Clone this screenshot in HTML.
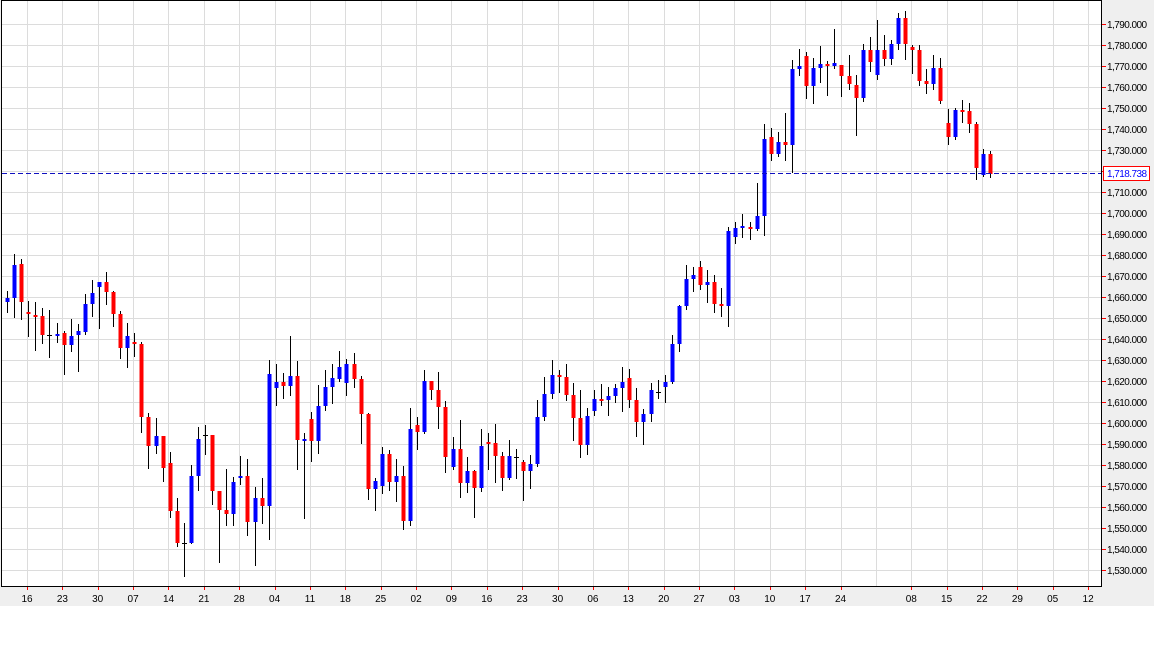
<!DOCTYPE html>
<html><head><meta charset="utf-8"><style>
html,body{margin:0;padding:0;background:#fff;width:1154px;height:648px;overflow:hidden}
svg{display:block}
text{font-family:"Liberation Sans",sans-serif;font-size:10px;fill:#000}
</style></head><body>
<svg id="s" width="1154" height="648" xmlns="http://www.w3.org/2000/svg">
<rect x="0" y="0" width="1154" height="606" fill="#efefef"/>
<rect x="1" y="0" width="1101" height="586" fill="#fff"/>
<g id="grid"></g>
<g id="candles"></g>
<line x1="2" y1="173.5" x2="1101" y2="173.5" stroke="#1010c0" stroke-width="1" stroke-dasharray="5,3"/>
<path d="M1.5 0V586.5H1101.5V0" fill="none" stroke="#000" stroke-width="1"/>
<line x1="1" y1="0.5" x2="1102" y2="0.5" stroke="#000"/>
<g id="ticks"></g>
<g text-anchor="start">
<text x="1107" y="28" textLength="40">1,790.000</text><text x="1107" y="49" textLength="40">1,780.000</text><text x="1107" y="70" textLength="40">1,770.000</text><text x="1107" y="91" textLength="40">1,760.000</text><text x="1107" y="112" textLength="40">1,750.000</text><text x="1107" y="133" textLength="40">1,740.000</text><text x="1107" y="154" textLength="40">1,730.000</text><text x="1107" y="196" textLength="40">1,710.000</text><text x="1107" y="217" textLength="40">1,700.000</text><text x="1107" y="238" textLength="40">1,690.000</text><text x="1107" y="259" textLength="40">1,680.000</text><text x="1107" y="280" textLength="40">1,670.000</text><text x="1107" y="301" textLength="40">1,660.000</text><text x="1107" y="322" textLength="40">1,650.000</text><text x="1107" y="343" textLength="40">1,640.000</text><text x="1107" y="364" textLength="40">1,630.000</text><text x="1107" y="385" textLength="40">1,620.000</text><text x="1107" y="406" textLength="40">1,610.000</text><text x="1107" y="427" textLength="40">1,600.000</text><text x="1107" y="448" textLength="40">1,590.000</text><text x="1107" y="469" textLength="40">1,580.000</text><text x="1107" y="490" textLength="40">1,570.000</text><text x="1107" y="511" textLength="40">1,560.000</text><text x="1107" y="532" textLength="40">1,550.000</text><text x="1107" y="553" textLength="40">1,540.000</text><text x="1107" y="574" textLength="40">1,530.000</text>
</g>
<rect x="1103.5" y="166.5" width="46" height="14" fill="#fff" stroke="#f00"/>
<text x="1107" y="177" textLength="40" style="fill:#0000ff">1,718.738</text>
<g text-anchor="middle">
<text x="27" y="602">16</text><text x="62.4" y="602">23</text><text x="97.7" y="602">30</text><text x="133.1" y="602">07</text><text x="168.5" y="602">14</text><text x="203.9" y="602">21</text><text x="239.2" y="602">28</text><text x="274.6" y="602">04</text><text x="310" y="602">11</text><text x="345.3" y="602">18</text><text x="380.7" y="602">25</text><text x="416.1" y="602">02</text><text x="451.4" y="602">09</text><text x="486.8" y="602">16</text><text x="522.2" y="602">23</text><text x="557.6" y="602">30</text><text x="592.9" y="602">06</text><text x="628.3" y="602">13</text><text x="663.7" y="602">20</text><text x="699" y="602">27</text><text x="734.4" y="602">03</text><text x="769.8" y="602">10</text><text x="805.1" y="602">17</text><text x="840.5" y="602">24</text><text x="911.3" y="602">08</text><text x="946.6" y="602">15</text><text x="982" y="602">22</text><text x="1017.4" y="602">29</text><text x="1052.7" y="602">05</text><text x="1088.1" y="602">12</text>
</g>
</svg>
<script>
var NS="http://www.w3.org/2000/svg";
function el(p,t,a){var e=document.createElementNS(NS,t);for(var k in a)e.setAttribute(k,a[k]);p.appendChild(e);return e;}
var g=document.getElementById('grid'),tk=document.getElementById('ticks');
for(var i=0;i<31;i++){var x=Math.round(27+i*35.37)+0.5;el(g,'line',{x1:x,y1:1,x2:x,y2:586,stroke:'#dcdcdc'});if(i!=24)el(tk,'line',{x1:x,y1:587,x2:x,y2:590,stroke:'#f00'});}
for(var k=0;k<27;k++){var y=Math.round(24+k*21.0)+0.5;el(g,'line',{x1:2,y1:y,x2:1101,y2:y,stroke:'#dcdcdc'});el(tk,'line',{x1:1102,y1:y,x2:1106,y2:y,stroke:'#f00'});}
var C=[[7,298,302,291,313,'b'],[14,265,298,254,318,'b'],[21,264,302,259,320,'r'],[28,312,314,301,337,'r'],[35,315,316,302,351,'r'],[42,316,335,308,344,'r'],[49,335,335,310,358,'d'],[57,334,335,323,343,'b'],[64,333,345,331,375,'r'],[71,336,345,319,352,'b'],[78,331,335,324,372,'b'],[85,304,332,294,335,'b'],[92,293,304,280,317,'b'],[99,282,287,282,329,'b'],[106,282,292,272,305,'r'],[113,292,314,291,327,'r'],[120,314,348,311,359,'r'],[127,336,348,323,368,'b'],[134,342,344,333,357,'r'],[141,344,417,342,433,'r'],[148,417,446,413,469,'r'],[156,436,446,418,454,'b'],[163,436,468,436,482,'r'],[170,463,511,452,518,'r'],[177,511,543,498,547,'r'],[184,543,543,523,577,'d'],[191,476,543,465,544,'b'],[198,439,476,427,491,'b'],[205,435,435,425,455,'d'],[212,435,491,435,505,'r'],[219,491,510,491,563,'r'],[226,510,514,469,526,'r'],[233,482,514,477,526,'b'],[240,476,478,456,485,'b'],[247,476,522,459,536,'r'],[255,498,522,487,566,'b'],[262,498,506,478,524,'r'],[269,374,506,360,540,'b'],[276,382,388,364,406,'b'],[283,382,386,373,399,'r'],[290,376,386,336,396,'b'],[297,376,440,361,470,'r'],[304,439,440,433,519,'b'],[311,419,441,412,462,'r'],[318,406,441,385,454,'b'],[325,387,406,370,411,'b'],[332,378,387,364,404,'b'],[339,367,379,351,382,'b'],[346,364,383,359,396,'b'],[354,364,379,353,388,'r'],[361,379,414,376,444,'r'],[368,414,489,413,500,'r'],[375,481,489,478,511,'b'],[382,454,486,447,494,'b'],[389,454,482,450,491,'r'],[396,476,482,459,502,'b'],[403,476,521,466,530,'r'],[410,429,521,408,526,'b'],[417,425,432,417,450,'r'],[424,381,432,370,434,'b'],[431,381,390,381,400,'r'],[438,390,407,372,429,'r'],[445,407,457,401,473,'r'],[453,449,467,437,470,'b'],[460,449,483,420,498,'r'],[467,471,483,457,493,'b'],[474,471,488,470,518,'r'],[481,446,488,429,492,'b'],[488,442,443,433,470,'r'],[495,443,456,424,483,'r'],[502,456,478,452,491,'r'],[509,456,478,440,480,'b'],[516,457,457,449,479,'d'],[523,462,471,460,501,'r'],[530,464,471,455,489,'b'],[537,417,464,400,467,'b'],[544,394,417,377,421,'b'],[552,375,394,360,399,'b'],[559,375,377,370,393,'r'],[566,377,395,364,401,'r'],[573,395,418,383,441,'r'],[580,418,445,390,458,'r'],[587,416,445,408,455,'b'],[594,399,411,390,416,'b'],[601,399,400,384,406,'r'],[608,396,400,387,416,'b'],[615,388,396,384,403,'b'],[622,382,388,367,412,'b'],[629,378,400,369,408,'r'],[636,400,422,388,437,'r'],[643,414,422,409,445,'b'],[651,390,414,383,422,'b'],[658,392,392,380,399,'d'],[665,382,387,375,403,'b'],[672,344,382,335,384,'b'],[679,306,344,305,352,'b'],[686,279,306,265,310,'b'],[693,275,279,267,292,'b'],[700,267,285,261,290,'r'],[707,282,285,270,303,'b'],[714,282,304,275,313,'r'],[721,304,306,288,317,'r'],[728,231,306,227,327,'b'],[735,228,237,222,244,'b'],[742,226,228,214,238,'b'],[750,227,229,222,240,'r'],[757,216,229,183,231,'b'],[764,139,216,124,236,'b'],[771,137,154,128,161,'r'],[778,142,154,132,157,'b'],[785,142,145,113,161,'r'],[792,69,145,60,173,'b'],[799,66,69,49,76,'b'],[806,56,86,52,99,'r'],[813,68,86,58,104,'b'],[820,64,68,46,83,'b'],[827,64,66,61,96,'r'],[834,63,66,29,69,'b'],[841,65,76,65,97,'r'],[849,76,84,55,90,'r'],[856,85,98,75,136,'r'],[863,50,98,44,102,'b'],[870,50,62,37,72,'r'],[877,50,75,20,80,'b'],[884,50,59,35,66,'r'],[891,44,59,40,65,'b'],[898,18,44,13,50,'b'],[905,18,44,11,60,'r'],[912,47,50,45,74,'r'],[919,50,81,45,86,'r'],[926,81,84,69,94,'r'],[933,68,84,55,90,'b'],[940,68,101,58,104,'r'],[948,123,137,109,145,'r'],[955,110,137,108,140,'b'],[962,110,111,100,123,'r'],[969,111,124,103,133,'r'],[976,124,168,122,180,'r'],[983,154,175,149,177,'b'],[990,154,174,151,178,'r']];
var cg=document.getElementById('candles');
C.forEach(function(c){var x=c[0];
el(cg,'rect',{x:x,y:c[3],width:1,height:c[4]-c[3],fill:'#000'});
if(c[5]=='d'){el(cg,'rect',{x:x-2,y:c[1],width:5,height:1,fill:'#000'});}
else{el(cg,'rect',{x:x-1.5,y:c[1],width:4,height:Math.max(2,c[2]-c[1]),fill:c[5]=='b'?'#0000ff':'#ff0000'});}
});
</script>
</body></html>
